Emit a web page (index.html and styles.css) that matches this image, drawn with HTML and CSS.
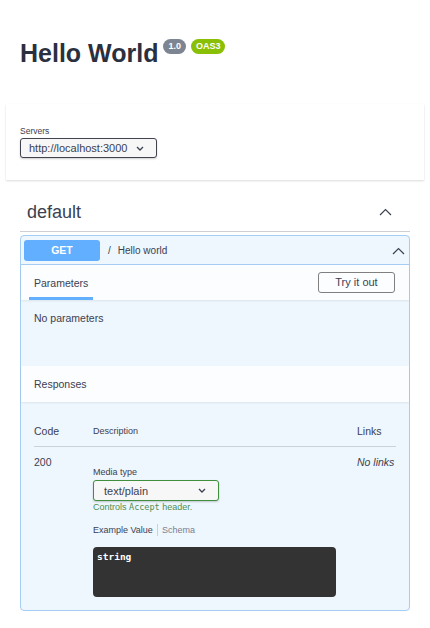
FILE: index.html
```html
<!DOCTYPE html>
<html>
<head>
<meta charset="utf-8">
<link rel="stylesheet" href="styles.css">
</head>
<body>
<div class="info">
  <h1 class="title">Hello World<span class="badge ver">1.0</span><span class="badge oas">OAS3</span></h1>
</div>

<div class="servers">
  <div class="servers-label">Servers</div>
  <div class="select server-select">
    <span>http://localhost:3000</span>
    <svg width="8" height="5" viewBox="0 0 8 5"><path d="M1 1l3 3 3-3" fill="none" stroke="#3b4151" stroke-width="1.3"/></svg>
  </div>
</div>

<div class="tag">
  <span class="tag-name">default</span>
  <svg class="tag-chev" width="13" height="8" viewBox="0 0 13 8"><path d="M1 7l5.5-5.5L12 7" fill="none" stroke="#3b4151" stroke-width="1.2"/></svg>
</div>

<div class="opblock">
  <div class="summary">
    <span class="method">GET</span>
    <span class="path">/</span>
    <span class="desc">Hello world</span>
    <svg class="sum-chev" width="13" height="8" viewBox="0 0 13 8"><path d="M1 7l5.5-5.5L12 7" fill="none" stroke="#3b4151" stroke-width="1.2"/></svg>
  </div>

  <div class="section-header params-header">
    <div class="tab">Parameters</div>
    <div class="try">Try it out</div>
  </div>
  <div class="params-body">No parameters</div>

  <div class="section-header resp-header">
    <div class="resp-title">Responses</div>
  </div>

  <div class="resp-body">
    <div class="row head">
      <div class="c-code">Code</div>
      <div class="c-desc small">Description</div>
      <div class="c-links">Links</div>
    </div>
    <div class="row body">
      <div class="c-code">200</div>
      <div class="c-desc">
        <div class="small media-label">Media type</div>
        <div class="select media-select">
          <span>text/plain</span>
          <svg width="8" height="5" viewBox="0 0 8 5"><path d="M1 1l3 3 3-3" fill="none" stroke="#3b4151" stroke-width="1.3"/></svg>
        </div>
        <div class="small controls">Controls <code>Accept</code> header.</div>
        <div class="small tabs"><span class="tab-active">Example Value</span><span class="tab-sep"></span><span class="tab-other">Schema</span></div>
        <div class="code-block">string</div>
      </div>
      <div class="c-links nolinks">No links</div>
    </div>
  </div>
</div>
</body>
</html>
```

FILE: styles.css
```css
* { box-sizing: border-box; }
body {
  margin: 0;
  font-family: "Liberation Sans", Arial, sans-serif;
  color: #3b4151;
  background: #fff;
}
.info { padding: 38px 20px 0; }
.title {
  margin: 0;
  display: flex;
  align-items: flex-start;
  font-size: 25px;
  line-height: 30px;
  font-weight: bold;
  color: #2b3040;
}
.badge {
  margin-left: 5px;
  margin-top: 1px;
  height: 15px;
  line-height: 15px;
  padding: 0 5px;
  border-radius: 8px;
  font-size: 9px;
  font-weight: bold;
  color: #fff;
}
.ver { background: #7d8492; }
.oas { background: #89bf04; }

.servers {
  margin: 36px 6px 0;
  padding: 22px 14px 22px;
  background: #fff;
  box-shadow: 0 1px 2px rgba(0,0,0,.15);
}
.servers-label {
  font-size: 8.5px;
  line-height: 11px;
  margin-bottom: 1px;
}
.select {
  display: flex;
  align-items: center;
  justify-content: space-between;
  border: 1.5px solid #41444e;
  border-radius: 3px;
  background: #f7f7f7;
  box-shadow: 0 1px 2px rgba(0,0,0,.2);
  color: #3b4151;
}
.server-select {
  width: 137px;
  height: 20px;
  padding: 0 12px 0 8px;
  font-size: 11px;
}

.tag {
  margin: 8px 20px 0;
  padding: 13px 18px 8px 7px;
  height: 44px;
  display: flex;
  align-items: center;
  justify-content: space-between;
  border-bottom: 1px solid rgba(59,65,81,.25);
}
.tag-name { font-size: 18px; line-height: 22px; color: #3b4151; }

.opblock {
  margin: 3px 20px 0;
  border: 1px solid #a6cdf4;
  border-radius: 4px;
  background: #eef6fe;
}
.summary {
  display: flex;
  align-items: center;
  padding: 4px 4px 3px 3px;
  border-bottom: 1px solid #a6cdf4;
}
.method {
  width: 76px;
  height: 21px;
  line-height: 21px;
  text-align: center;
  background: #61affe;
  border-radius: 3px;
  color: #fff;
  font-weight: bold;
  font-size: 10.5px;
}
.path { margin-left: 8px; font-size: 10px; color: #3b4151; }
.desc { margin-left: 7px; font-size: 10px; color: #3b4151; }
.sum-chev { margin-left: auto; margin-right: 0; }

.section-header {
  display: flex;
  align-items: center;
  background: rgba(255,255,255,.8);
  box-shadow: 0 1px 2px rgba(0,0,0,.08);
}
.params-header {
  height: 35px;
  padding: 0 14px 0 8px;
  justify-content: space-between;
}
.tab {
  align-self: stretch;
  display: flex;
  align-items: center;
  padding: 0 5px;
  font-size: 10.5px;
  border-bottom: 3px solid #61affe;
  padding-top: 3px;
}
.try {
  width: 77px;
  height: 21px;
  line-height: 18px;
  text-align: center;
  border: 1.5px solid #808080;
  border-radius: 3px;
  font-size: 11px;
  background: transparent;
}
.params-body {
  height: 66px;
  padding: 11px 13px 10px;
  font-size: 10.5px;
  line-height: 14px;
}
.resp-header {
  height: 36px;
  padding: 0 13px;
}
.resp-title { font-size: 10.5px; }

.resp-body {
  padding: 22px 13px 13px;
}
.row { display: flex; }
.row.head {
  align-items: center;
  padding-bottom: 8px;
  border-bottom: 1px solid rgba(59,65,81,.2);
}
.c-code { width: 59px; font-size: 10.5px; line-height: 14px; }
.c-desc { flex: 1; }
.c-links { width: 39px; font-size: 10.5px; line-height: 14px; }
.small { font-size: 9px; line-height: 12px; }
.row.body { padding-top: 8px; }
.nolinks { font-style: italic; }
.media-label { margin-top: 11px; }
.media-select {
  margin-top: 2px;
  width: 126px;
  height: 21px;
  padding: 0 12px 0 10px;
  font-size: 11px;
  border-color: #3f8f3f;
}
.controls { color: #4f8f4f; }
.controls code {
  font-family: "DejaVu Sans Mono", monospace;
  font-size: 8.5px;
}
.tabs {
  margin-top: 11px;
  display: flex;
  align-items: center;
}
.tab-active { color: #3b4151; }
.tab-sep { width: 1px; height: 12px; background: rgba(59,65,81,.2); margin: 0 4px; }
.tab-other { color: #7b808c; }
.code-block {
  margin-top: 11px;
  width: 243px;
  height: 50px;
  background: #333;
  border-radius: 4px;
  padding: 4px;
  color: #fff;
  font-family: "DejaVu Sans Mono", monospace;
  font-weight: bold;
  font-size: 9.5px;
  line-height: 12px;
}
```
